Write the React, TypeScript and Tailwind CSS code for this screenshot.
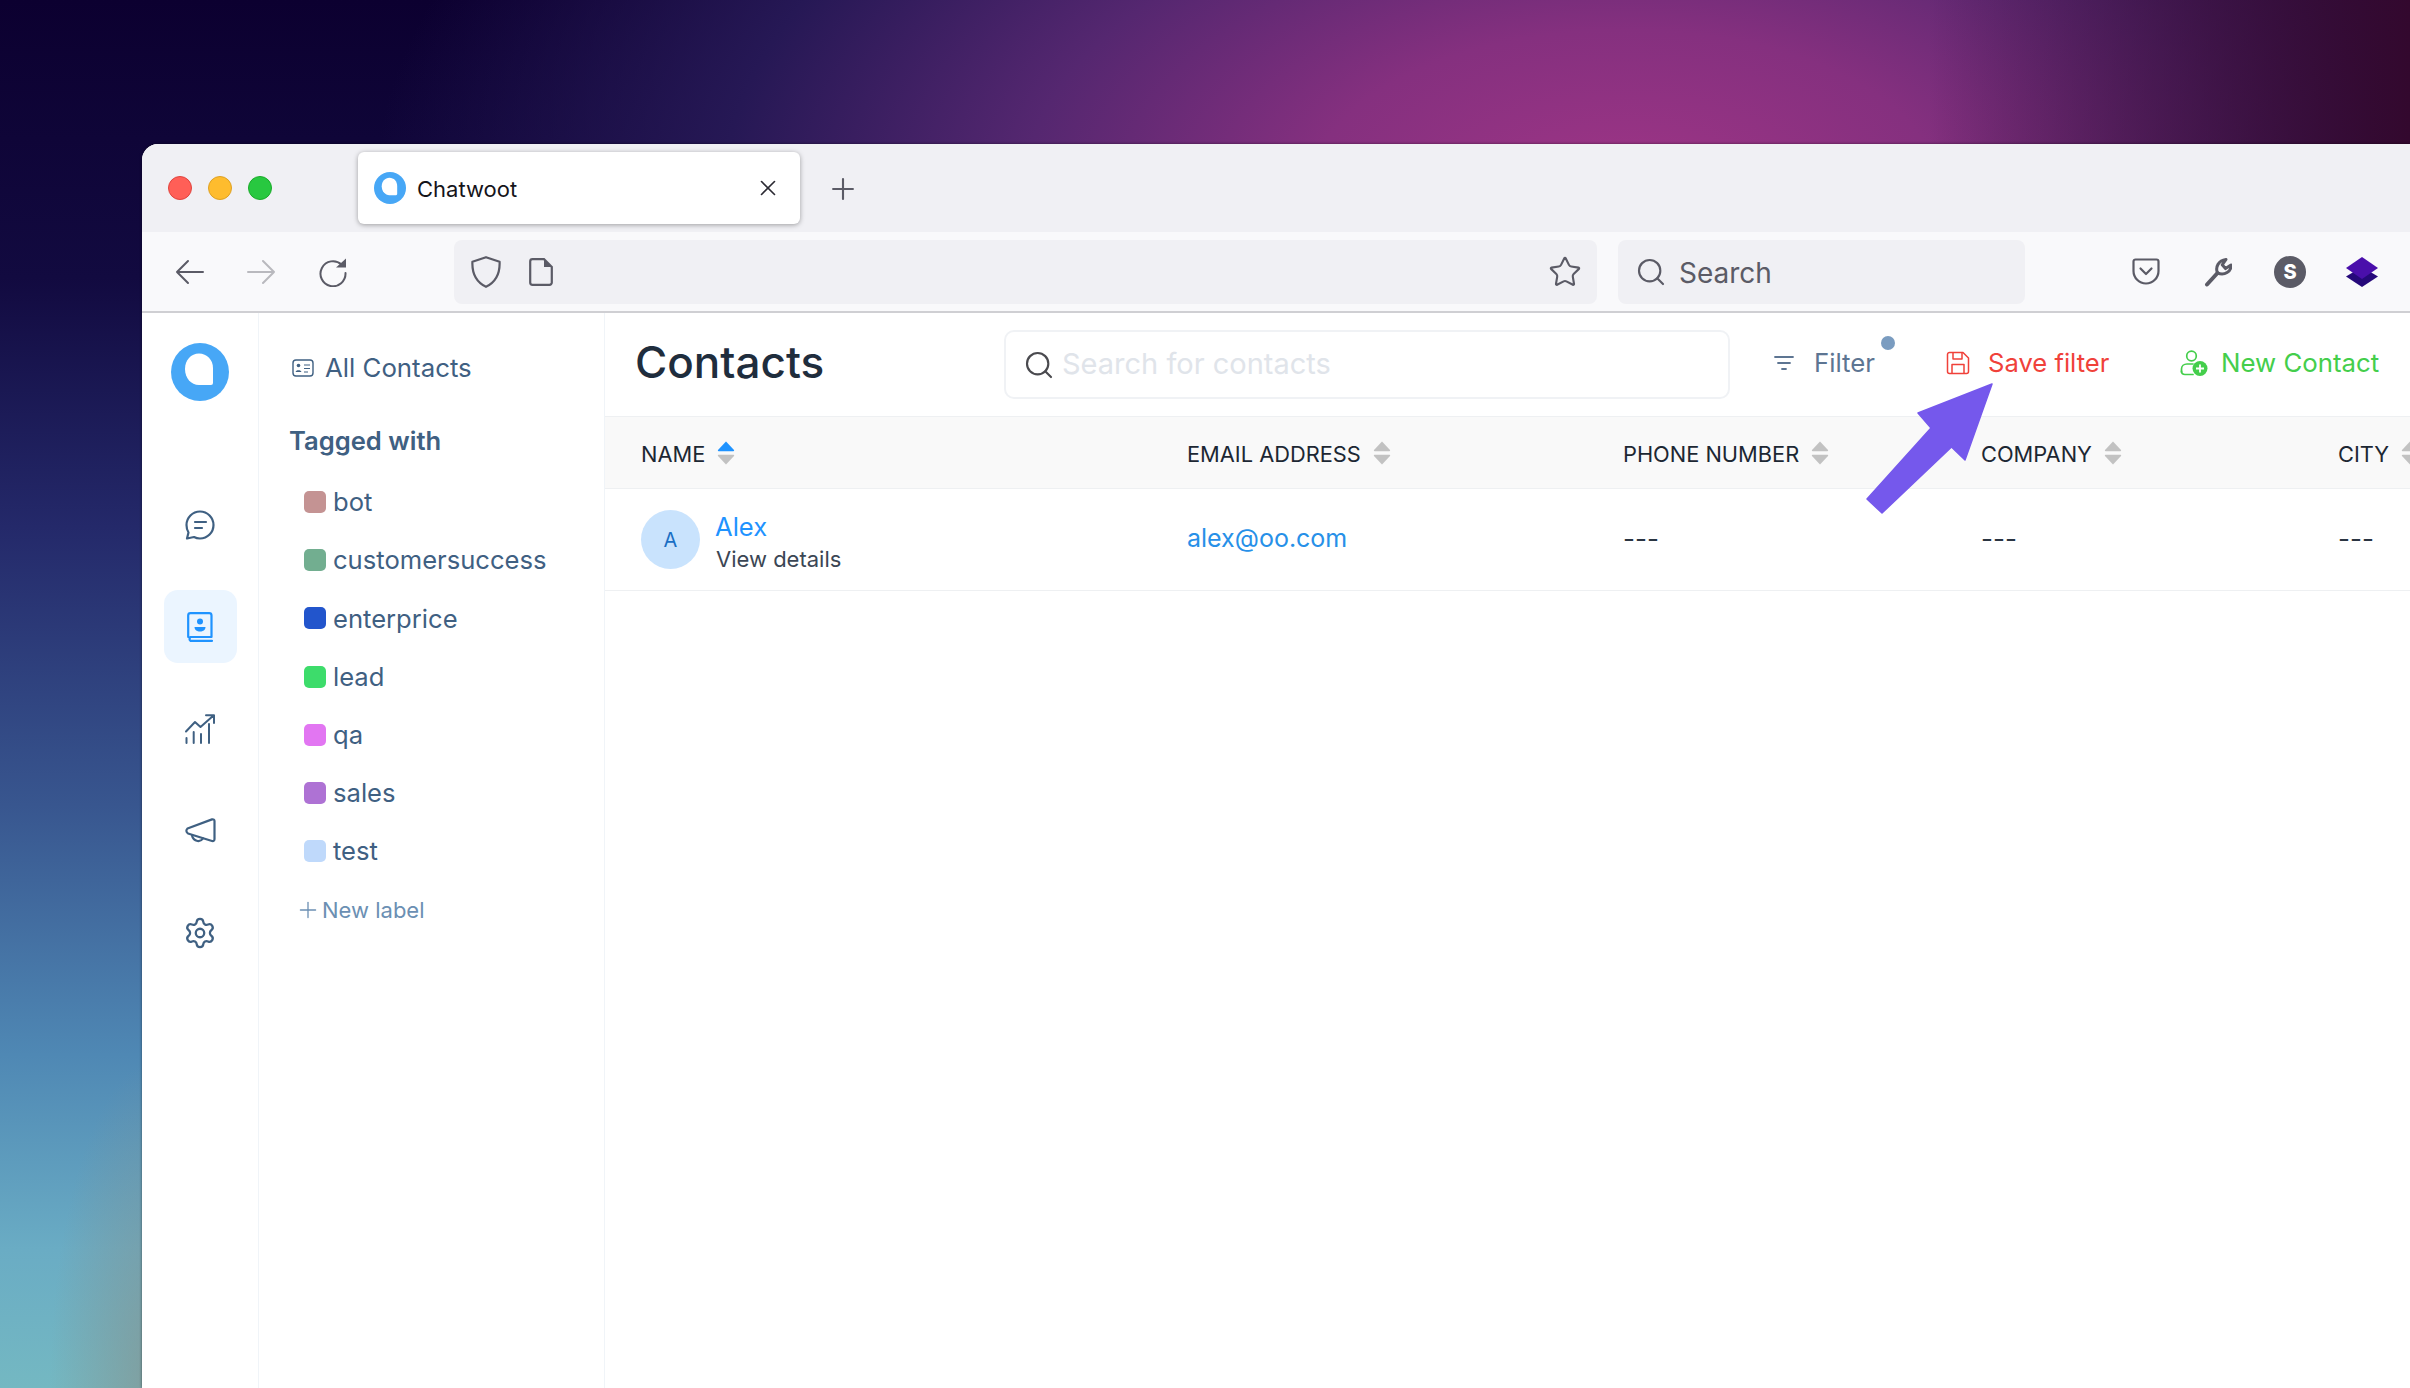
import React from "react";
import { Plus, X, Star, Search, Settings } from "lucide-react";

const Logo = ({ size }: { size: number }) => (
  <svg width={size} height={size} viewBox="0 0 58 58">
    <circle cx="29" cy="29" r="29" fill="#47a7f6" />
    <path d="M14 26C14 17 20 10.5 28 10.5C36 10.5 42 17 42 25V40a2 2 0 0 1-2 2H28C20 42 14 35 14 26Z" fill="#fff" />
  </svg>
);

const Sort = ({ active = false }: { active?: boolean }) => (
  <svg width="18" height="24" viewBox="0 0 18 24">
    <path d="M9 0.5L17 9a0.8 0.8 0 0 1-.6 1.2H1.6A0.8 0.8 0 0 1 1 9Z" fill={active ? "#1f93ff" : "#c2c2c2"} />
    <path d="M9 23.5L17 15a0.8 0.8 0 0 0-.6-1.2H1.6A0.8 0.8 0 0 0 1 15Z" fill="#c2c2c2" />
  </svg>
);

const navColor = "#3f6082";

const labels = [
  ["bot", "bg-[#c49393]"],
  ["customersuccess", "bg-[#72ae90]"],
  ["enterprice", "bg-[#2255cc]"],
  ["lead", "bg-[#3ddc6b]"],
  ["qa", "bg-[#e276f2]"],
  ["sales", "bg-[#ae72d4]"],
  ["test", "bg-[#bfd9fb]"],
];

const columns = ["EMAIL ADDRESS", "PHONE NUMBER", "COMPANY", "CITY"];

export default function App() {
  return (
    <div className="relative w-[2410px] h-[1388px] overflow-hidden pt-[144px] pl-[142px] [font-family:Inter,sans-serif] bg-[linear-gradient(to_right,transparent_80%,#33082e_100%),radial-gradient(ellipse_110px_330px_at_160px_1388px,rgba(135,145,140,0.7)_0%,transparent_100%),radial-gradient(ellipse_1250px_640px_at_1625px_190px,#9f3586_0%,#85307f_25%,#552770_48%,#261855_72%,transparent_100%),linear-gradient(to_bottom,#0c0030_0%,#120a40_20%,#24296a_38%,#38568f_58%,#4f88b4_76%,#6aacc4_90%,#74b8c2_100%)]">
      <div className="w-[2268px] h-[1244px] bg-white rounded-tl-[16px] overflow-hidden flex flex-col shadow-[0_0_3px_rgba(0,0,0,0.5)]">
        {/* tab strip */}
        <div className="h-[88px] bg-[#f0f0f4] flex shrink-0">
          <div className="w-[216px] h-[88px] flex items-center gap-[16px] pl-[26px]">
            <div className="w-[24px] h-[24px] rounded-full bg-[#ff5f57] border border-[#e0443e]" />
            <div className="w-[24px] h-[24px] rounded-full bg-[#febc2e] border border-[#dea123]" />
            <div className="w-[24px] h-[24px] rounded-full bg-[#28c840] border border-[#1aab29]" />
          </div>
          <div className="mt-[8px] w-[442px] h-[72px] bg-white rounded-[6px] shadow-[0_1px_5px_rgba(0,0,0,0.35)] flex items-center pl-[16px] pr-[19px]">
            <Logo size={32} />
            <span className="ml-[11px] mt-[2px] text-[22px] text-[#15141a] flex-1">Chatwoot</span>
            <X size={26} strokeWidth={1.5} className="text-[#2b2a33]" />
          </div>
          <div className="ml-[26px] h-[90px] flex items-center">
            <Plus size={34} strokeWidth={1.5} className="text-[#5b5b66]" />
          </div>
        </div>

        {/* toolbar */}
        <div className="h-[81px] bg-[#f9f9fb] border-b-2 border-[#cfcfd3] shrink-0 flex items-center">
          <div className="w-[312px] flex items-center pl-[33px] gap-[43px]">
            <svg width="29" height="26" viewBox="0 0 29 26" fill="none" stroke="#5b5b66" strokeWidth="2" strokeLinecap="round" strokeLinejoin="round">
              <path d="M28 13H2M13 2L2 13L13 24" />
            </svg>
            <svg width="29" height="26" viewBox="0 0 29 26" fill="none" stroke="#b9b9be" strokeWidth="2" strokeLinecap="round" strokeLinejoin="round">
              <path d="M1 13H27M16 2L27 13L16 24" />
            </svg>
            <svg className="-ml-[1px]" width="30" height="30" viewBox="0 0 30 30" fill="none">
              <path d="M23.5 7.5A12.5 12.5 0 1 0 27.5 16" stroke="#5b5b66" strokeWidth="2" strokeLinecap="round" />
              <path d="M18 10.5L28 1.5V10.5Z" fill="#5b5b66" />
            </svg>
          </div>
          <div className="w-[1143px] h-[64px] bg-[#f0f0f4] rounded-[8px] flex items-center pl-[17px] pr-[15px]">
            <svg width="30" height="32" viewBox="0 0 30 32" fill="none">
              <path d="M15 1.2L28.6 5.8C29 16 26 25.5 15 30.8C4 25.5 1 16 1.4 5.8Z" stroke="#5b5b66" strokeWidth="2.2" strokeLinejoin="round" />
            </svg>
            <svg className="ml-[28px]" width="24" height="28" viewBox="0 0 24 28" fill="none">
              <path d="M3.5 1.2H15L22.8 9V24.5a2.3 2.3 0 0 1-2.3 2.3H3.5a2.3 2.3 0 0 1-2.3-2.3V3.5A2.3 2.3 0 0 1 3.5 1.2Z" stroke="#5b5b66" strokeWidth="2.2" />
              <path d="M15 1.2L22.8 9H15Z" fill="#5b5b66" />
            </svg>
            <Star size={34} strokeWidth={1.5} className="ml-auto text-[#5b5b66]" />
          </div>
          <div className="ml-[21px] w-[407px] h-[64px] bg-[#f0f0f4] rounded-[8px] flex items-center pl-[17px]">
            <Search size={32} strokeWidth={1.6} className="text-[#5b5b66]" />
            <span className="ml-[12px] mt-[2px] text-[28px] leading-none text-[#5b5b66]">Search</span>
          </div>
          <div className="ml-[85px] flex items-center">
            <div className="w-[72px] flex justify-center">
              <svg width="28" height="28" viewBox="0 0 28 28" fill="none">
                <path d="M3.5 1.5H24.5a2 2 0 0 1 2 2V13A12.5 12.5 0 0 1 1.5 13V3.5a2 2 0 0 1 2-2Z" stroke="#5b5b66" strokeWidth="2.2" />
                <path d="M8.5 10.5L14 16L19.5 10.5" stroke="#5b5b66" strokeWidth="2.2" strokeLinecap="round" strokeLinejoin="round" />
              </svg>
            </div>
            <div className="w-[72px] flex justify-center">
              <svg width="28" height="30" viewBox="0 0 28 30" fill="none">
                <path d="M3 27.5L13.5 16" stroke="#5b5b66" strokeWidth="4" strokeLinecap="round" />
                <path d="M13.5 16C11 10 14.5 3.5 22 2.5L18.2 7.8L21.5 11.6L27 8C27.5 14.5 20.5 19 13.5 16Z" fill="none" stroke="#5b5b66" strokeWidth="3" strokeLinejoin="round" />
              </svg>
            </div>
            <div className="w-[72px] flex justify-center">
              <div className="w-[32px] h-[32px] rounded-full bg-[#5b5b66] flex items-center justify-center text-white text-[20px] font-extrabold">S</div>
            </div>
            <div className="w-[72px] flex justify-center">
              <svg width="32" height="30" viewBox="0 0 32 30">
                <path d="M16 10L32 19.5L16 30L0 19.5Z" fill="#26097a" />
                <path d="M16 0L32 11L16 22L0 11Z" fill="#4a0fab" />
              </svg>
            </div>
          </div>
        </div>

        {/* app */}
        <div className="flex-1 flex min-h-0">
          <div className="w-[117px] shrink-0 border-r border-[#f0f4f8] flex flex-col items-center pt-[30px]">
            <Logo size={58} />
            <div className="mt-[87px] flex flex-col gap-[29px]">
              <div className="w-[73px] h-[73px] flex items-center justify-center">
                <svg width="30" height="30" viewBox="0 0 30 30" fill="none" stroke={navColor} strokeWidth="2.2" strokeLinecap="round" strokeLinejoin="round">
                  <path d="M15 1.5C22.5 1.5 28.5 7.5 28.5 15S22.5 28.5 15 28.5C12.8 28.5 10.8 28 9 27L2 28.5L3.5 22.5C2.2 20.4 1.5 17.8 1.5 15C1.5 7.5 7.5 1.5 15 1.5Z" />
                  <path d="M10 12H21M10 18H17" />
                </svg>
              </div>
              <div className="w-[73px] h-[73px] flex items-center justify-center rounded-[14px] bg-[#ebf5ff]">
                <svg width="26" height="30" viewBox="0 0 26 30" fill="none">
                  <path d="M1.2 25V3.5A2.3 2.3 0 0 1 3.5 1.2H22.2A2.3 2.3 0 0 1 24.5 3.5V25H3.5A2.3 2.3 0 0 0 3.5 28.8H25" stroke="#1f93ff" strokeWidth="2.2" strokeLinecap="round" strokeLinejoin="round" />
                  <circle cx="13" cy="9.5" r="3" fill="#1f93ff" />
                  <path d="M7.5 15H18.5C18.5 18 16 19.5 13 19.5S7.5 18 7.5 15Z" fill="#1f93ff" />
                </svg>
              </div>
              <div className="w-[73px] h-[73px] flex items-center justify-center">
                <svg width="30" height="30" viewBox="0 0 30 30" fill="none" stroke={navColor} strokeWidth="2" strokeLinecap="round" strokeLinejoin="round">
                  <path d="M1 17.5L10 8L15.5 13L28.5 1.5M21 1.2H29V9" />
                  <path d="M1.5 24V29M8.7 18V29M16 20V29M24 10V29" />
                </svg>
              </div>
              <div className="w-[73px] h-[73px] flex items-center justify-center">
                <svg width="31" height="25" viewBox="0 0 31 25" fill="none" stroke={navColor} strokeWidth="2.2" strokeLinecap="round" strokeLinejoin="round">
                  <path d="M2.5 10.5L27 1.4Q29.5 1 29.5 3V21Q29.5 23.5 27 23L3 15.5Q0 13 2.5 10.5Z" />
                  <path d="M7 17.5Q8 22 12.5 23Q16 23.5 18 20.5" />
                </svg>
              </div>
              <div className="w-[73px] h-[73px] flex items-center justify-center">
                <Settings size={34} strokeWidth={1.6} color={navColor} />
              </div>
            </div>
          </div>

          <div className="w-[346px] shrink-0 border-r border-[#f0f4f8] pt-[40px] text-[#3f6082]">
            <div className="h-[30px] flex items-center pl-[33px]">
              <svg width="22" height="18" viewBox="0 0 22 18" fill="none">
                <rect x="1" y="1" width="20" height="16" rx="3" stroke="#3f6082" strokeWidth="1.4" />
                <circle cx="6.5" cy="6.5" r="1.8" fill="#3f6082" />
                <path d="M3.6 13C3.6 10.5 9.4 10.5 9.4 13Z" fill="#3f6082" />
                <path d="M12 6H18M12 9.5H18M12 13H16" stroke="#3f6082" strokeWidth="1.2" />
              </svg>
              <span className="ml-[11px] mb-[1px] text-[25.8px] leading-none">All Contacts</span>
            </div>
            <div className="mt-[40px] h-[36px] flex items-center pl-[30px] text-[25.6px] font-semibold">Tagged with</div>
            <div className="mt-[14px] flex flex-col">
              {labels.map(([name, color]) => (
                <div key={name} className="h-[58.2px] flex items-center pl-[45px]">
                  <div className={`w-[22px] h-[22px] rounded-[5px] ${color}`} />
                  <span className="ml-[7px] text-[25.6px] leading-none">{name}</span>
                </div>
              ))}
            </div>
            <div className="mt-[1px] h-[58px] flex items-center pl-[36px] text-[22px] text-[#6b8fb3]">
              <Plus size={26} strokeWidth={1.2} />
              <span className="ml-[1px] leading-none">New label</span>
            </div>
          </div>

          <div className="flex-1 min-w-0 flex flex-col">
            <div className="h-[103px] flex items-center pl-[30px] shrink-0 relative">
              <h1 className="w-[369px] mb-[6px] text-[44px] font-medium text-[#1f2d3d] leading-none">Contacts</h1>
              <div className="w-[726px] h-[69px] border-2 border-[#f0f2f5] rounded-[10px] flex items-center pl-[17px]">
                <Search size={32} strokeWidth={1.6} className="text-[#4a4a4f]" />
                <input readOnly placeholder="Search for contacts" className="ml-[7px] mb-[1px] w-[500px] bg-transparent outline-none text-[29px] placeholder:text-[#e0e4ea]" />
              </div>
              <div className="ml-[44px] w-[172px] flex items-center relative mb-[3px]">
                <svg width="20" height="16" viewBox="0 0 20 16" fill="none" stroke="#5d7592" strokeWidth="1.8" strokeLinecap="round">
                  <path d="M1 2H19M4 8H16M8 14H12" />
                </svg>
                <span className="ml-[20px] text-[25.8px] text-[#5d7592] leading-none">Filter</span>
                <div className="absolute left-[107px] top-[-14px] w-[14px] h-[14px] rounded-full bg-[#7a9cc0]" />
              </div>
              <div className="w-[234px] flex items-center mb-[3px]">
                <svg width="24" height="24" viewBox="0 0 24 24" fill="none" stroke="#f0413a" strokeWidth="1.5" strokeLinejoin="round">
                  <path d="M3.5 1.5H17L22.5 7V20.5a2 2 0 0 1-2 2H3.5a2 2 0 0 1-2-2V3.5a2 2 0 0 1 2-2Z" />
                  <path d="M7 1.5V8H16V1.5M6 22.5V13.5H18V22.5" />
                </svg>
                <span className="ml-[18px] text-[25.6px] text-[#f0413a] leading-none">Save filter</span>
              </div>
              <div className="flex items-center mb-[3px]">
                <svg width="28" height="26" viewBox="0 0 28 26" fill="none">
                  <circle cx="11.5" cy="6" r="4.8" stroke="#44ce4b" strokeWidth="1.7" />
                  <path d="M1.5 22V19C1.5 16 4 14 7 14H13" stroke="#44ce4b" strokeWidth="1.7" strokeLinecap="round" />
                  <path d="M1.5 21C1.5 23.5 3 24.5 5 24.5H13" stroke="#44ce4b" strokeWidth="1.7" strokeLinecap="round" />
                  <circle cx="20" cy="18.5" r="7.5" fill="#44ce4b" />
                  <path d="M20 14.5V22.5M16 18.5H24" stroke="#fff" strokeWidth="1.8" />
                </svg>
                <span className="ml-[13px] text-[25.8px] text-[#44ce4b] leading-none whitespace-nowrap">New Contact</span>
              </div>
            </div>

            <div className="h-[73px] shrink-0 bg-[#f9f9f9] border-y border-[#eef0f2] grid grid-cols-[546px_436px_358px_357px_100px] items-center pl-[36px] pt-[2px] text-[21.8px] text-[#1c2733]">
              <div className="flex items-center gap-[12px]">
                <span className="mt-[1px]">NAME</span>
                <div className="mb-[1px]"><Sort active /></div>
              </div>
              {columns.map((c) => (
                <div key={c} className="flex items-center gap-[12px] whitespace-nowrap">
                  <span className="mt-[1px]">{c}</span>
                  <div className="mb-[1px]"><Sort /></div>
                </div>
              ))}
            </div>

            <div className="h-[102px] shrink-0 border-b border-[#eef0f2] grid grid-cols-[546px_436px_358px_357px_100px] items-center pl-[36px]">
              <div className="flex items-center">
                <div className="w-[59px] h-[59px] rounded-full bg-[#c9e3fd] flex items-center justify-center text-[20px] text-[#1a6fc4]">A</div>
                <div className="ml-[16px] mt-[5px] flex flex-col">
                  <span className="text-[25.6px] leading-[33px] text-[#1f93ff] ml-[-1px]">Alex</span>
                  <span className="text-[22px] leading-[32px] text-[#3b4654]">View details</span>
                </div>
              </div>
              <div className="mb-[2px] text-[25px] text-[#2790e8]">alex@oo.com</div>
              <div className="mb-[2px] text-[26px] text-[#2a3542]">---</div>
              <div className="mb-[2px] text-[26px] text-[#2a3542]">---</div>
              <div className="mb-[2px] text-[26px] text-[#2a3542]">---</div>
            </div>
          </div>
        </div>
      </div>

      <svg className="absolute left-[1860px] top-[380px]" width="136" height="136" viewBox="1860 380 136 136">
        <path d="M1992 384L1918 413L1931 428L1867 499L1882 513L1951.5 447L1965 460Z" fill="#7558ec" stroke="#7558ec" strokeWidth="1.5" strokeLinejoin="round" />
      </svg>
    </div>
  );
}
